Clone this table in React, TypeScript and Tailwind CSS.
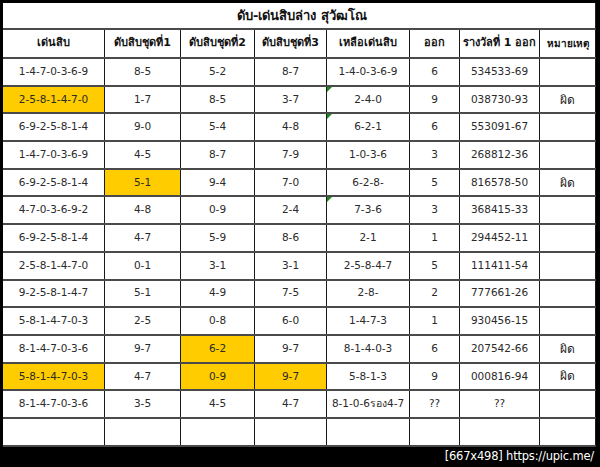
const cols = ["w-[102px]", "w-[76px]", "w-[74px]", "w-[72px]", "w-[83px]", "w-[50px]", "w-[80px]", "w-[56px]"];

const headers = ["เด่นสิบ", "ดับสิบชุดที่1", "ดับสิบชุดที่2", "ดับสิบชุดที่3", "เหลือเด่นสิบ", "ออก", "รางวัลที่ 1 ออก", "หมายเหตุ"];

type Row = { cells: string[]; hi?: number[]; mark?: boolean };

const rows: Row[] = [
  { cells: ["1-4-7-0-3-6-9", "8-5", "5-2", "8-7", "1-4-0-3-6-9", "6", "534533-69", ""] },
  { cells: ["2-5-8-1-4-7-0", "1-7", "8-5", "3-7", "2-4-0", "9", "038730-93", "ผิด"], hi: [0], mark: true },
  { cells: ["6-9-2-5-8-1-4", "9-0", "5-4", "4-8", "6-2-1", "6", "553091-67", ""], mark: true },
  { cells: ["1-4-7-0-3-6-9", "4-5", "8-7", "7-9", "1-0-3-6", "3", "268812-36", ""] },
  { cells: ["6-9-2-5-8-1-4", "5-1", "9-4", "7-0", "6-2-8-", "5", "816578-50", "ผิด"], hi: [1] },
  { cells: ["4-7-0-3-6-9-2", "4-8", "0-9", "2-4", "7-3-6", "3", "368415-33", ""], mark: true },
  { cells: ["6-9-2-5-8-1-4", "4-7", "5-9", "8-6", "2-1", "1", "294452-11", ""] },
  { cells: ["2-5-8-1-4-7-0", "0-1", "3-1", "3-1", "2-5-8-4-7", "5", "111411-54", ""] },
  { cells: ["9-2-5-8-1-4-7", "5-1", "4-9", "7-5", "2-8-", "2", "777661-26", ""] },
  { cells: ["5-8-1-4-7-0-3", "2-5", "0-8", "6-0", "1-4-7-3", "1", "930456-15", ""] },
  { cells: ["8-1-4-7-0-3-6", "9-7", "6-2", "9-7", "8-1-4-0-3", "6", "207542-66", "ผิด"], hi: [2] },
  { cells: ["5-8-1-4-7-0-3", "4-7", "0-9", "9-7", "5-8-1-3", "9", "000816-94", "ผิด"], hi: [0, 2, 3] },
  { cells: ["8-1-4-7-0-3-6", "3-5", "4-5", "4-7", "8-1-0-6รอง4-7", "??", "??", ""] },
  { cells: ["", "", "", "", "", "", "", ""] },
];

export default function App() {
  return (
    <div className="w-[600px] h-[467px] bg-black flex flex-col pt-[3px] pl-[3px] pr-[4px] font-['DejaVu_Sans','Noto_Sans',sans-serif]">
      <div className="bg-white flex flex-col">
        <div className="h-[27px] border-b-2 border-[#4a4a4a] border-r border-r-[#222] flex items-center justify-center pl-[6px] text-[13px] font-bold text-[#111]">
          ดับ-เด่นสิบล่าง สุวัฒโณ
        </div>
        <div className="flex h-[29px] border-b-2 border-[#4a4a4a]">
          {headers.map((h, i) => (
            <div
              key={i}
              className={`${cols[i]} shrink-0 border-r border-[#1a1a1a] flex items-center justify-center font-bold text-[#111] whitespace-nowrap ${
                i === 7 ? "text-[10px]" : "text-[11px]"
              }`}
            >
              {h}
            </div>
          ))}
        </div>
        {rows.map((r, ri) => (
          <div key={ri} className="flex h-[27.7px] border-b-2 border-[#4a4a4a]">
            {r.cells.map((c, ci) => (
              <div
                key={ci}
                className={`${cols[ci]} relative shrink-0 border-r border-[#1a1a1a] flex items-center justify-center whitespace-nowrap ${
                  ci === 7 ? "text-[12px] text-[#222]" : "text-[10.5px] text-[#2a2a2a]"
                } ${r.hi?.includes(ci) ? "bg-[#ffcc00]" : "bg-white"}`}
              >
                {r.mark && ci === 4 && (
                  <span className="absolute top-0 left-0 w-0 h-0 border-t-[5px] border-r-[5px] border-t-[#1e8a1e] border-r-transparent" />
                )}
                {c}
              </div>
            ))}
          </div>
        ))}
      </div>
      <div className="flex-1 flex items-center justify-end pr-[2px] text-white text-[11.5px] tracking-[-0.2px]">
        [667x498] https://upic.me/
      </div>
    </div>
  );
}
